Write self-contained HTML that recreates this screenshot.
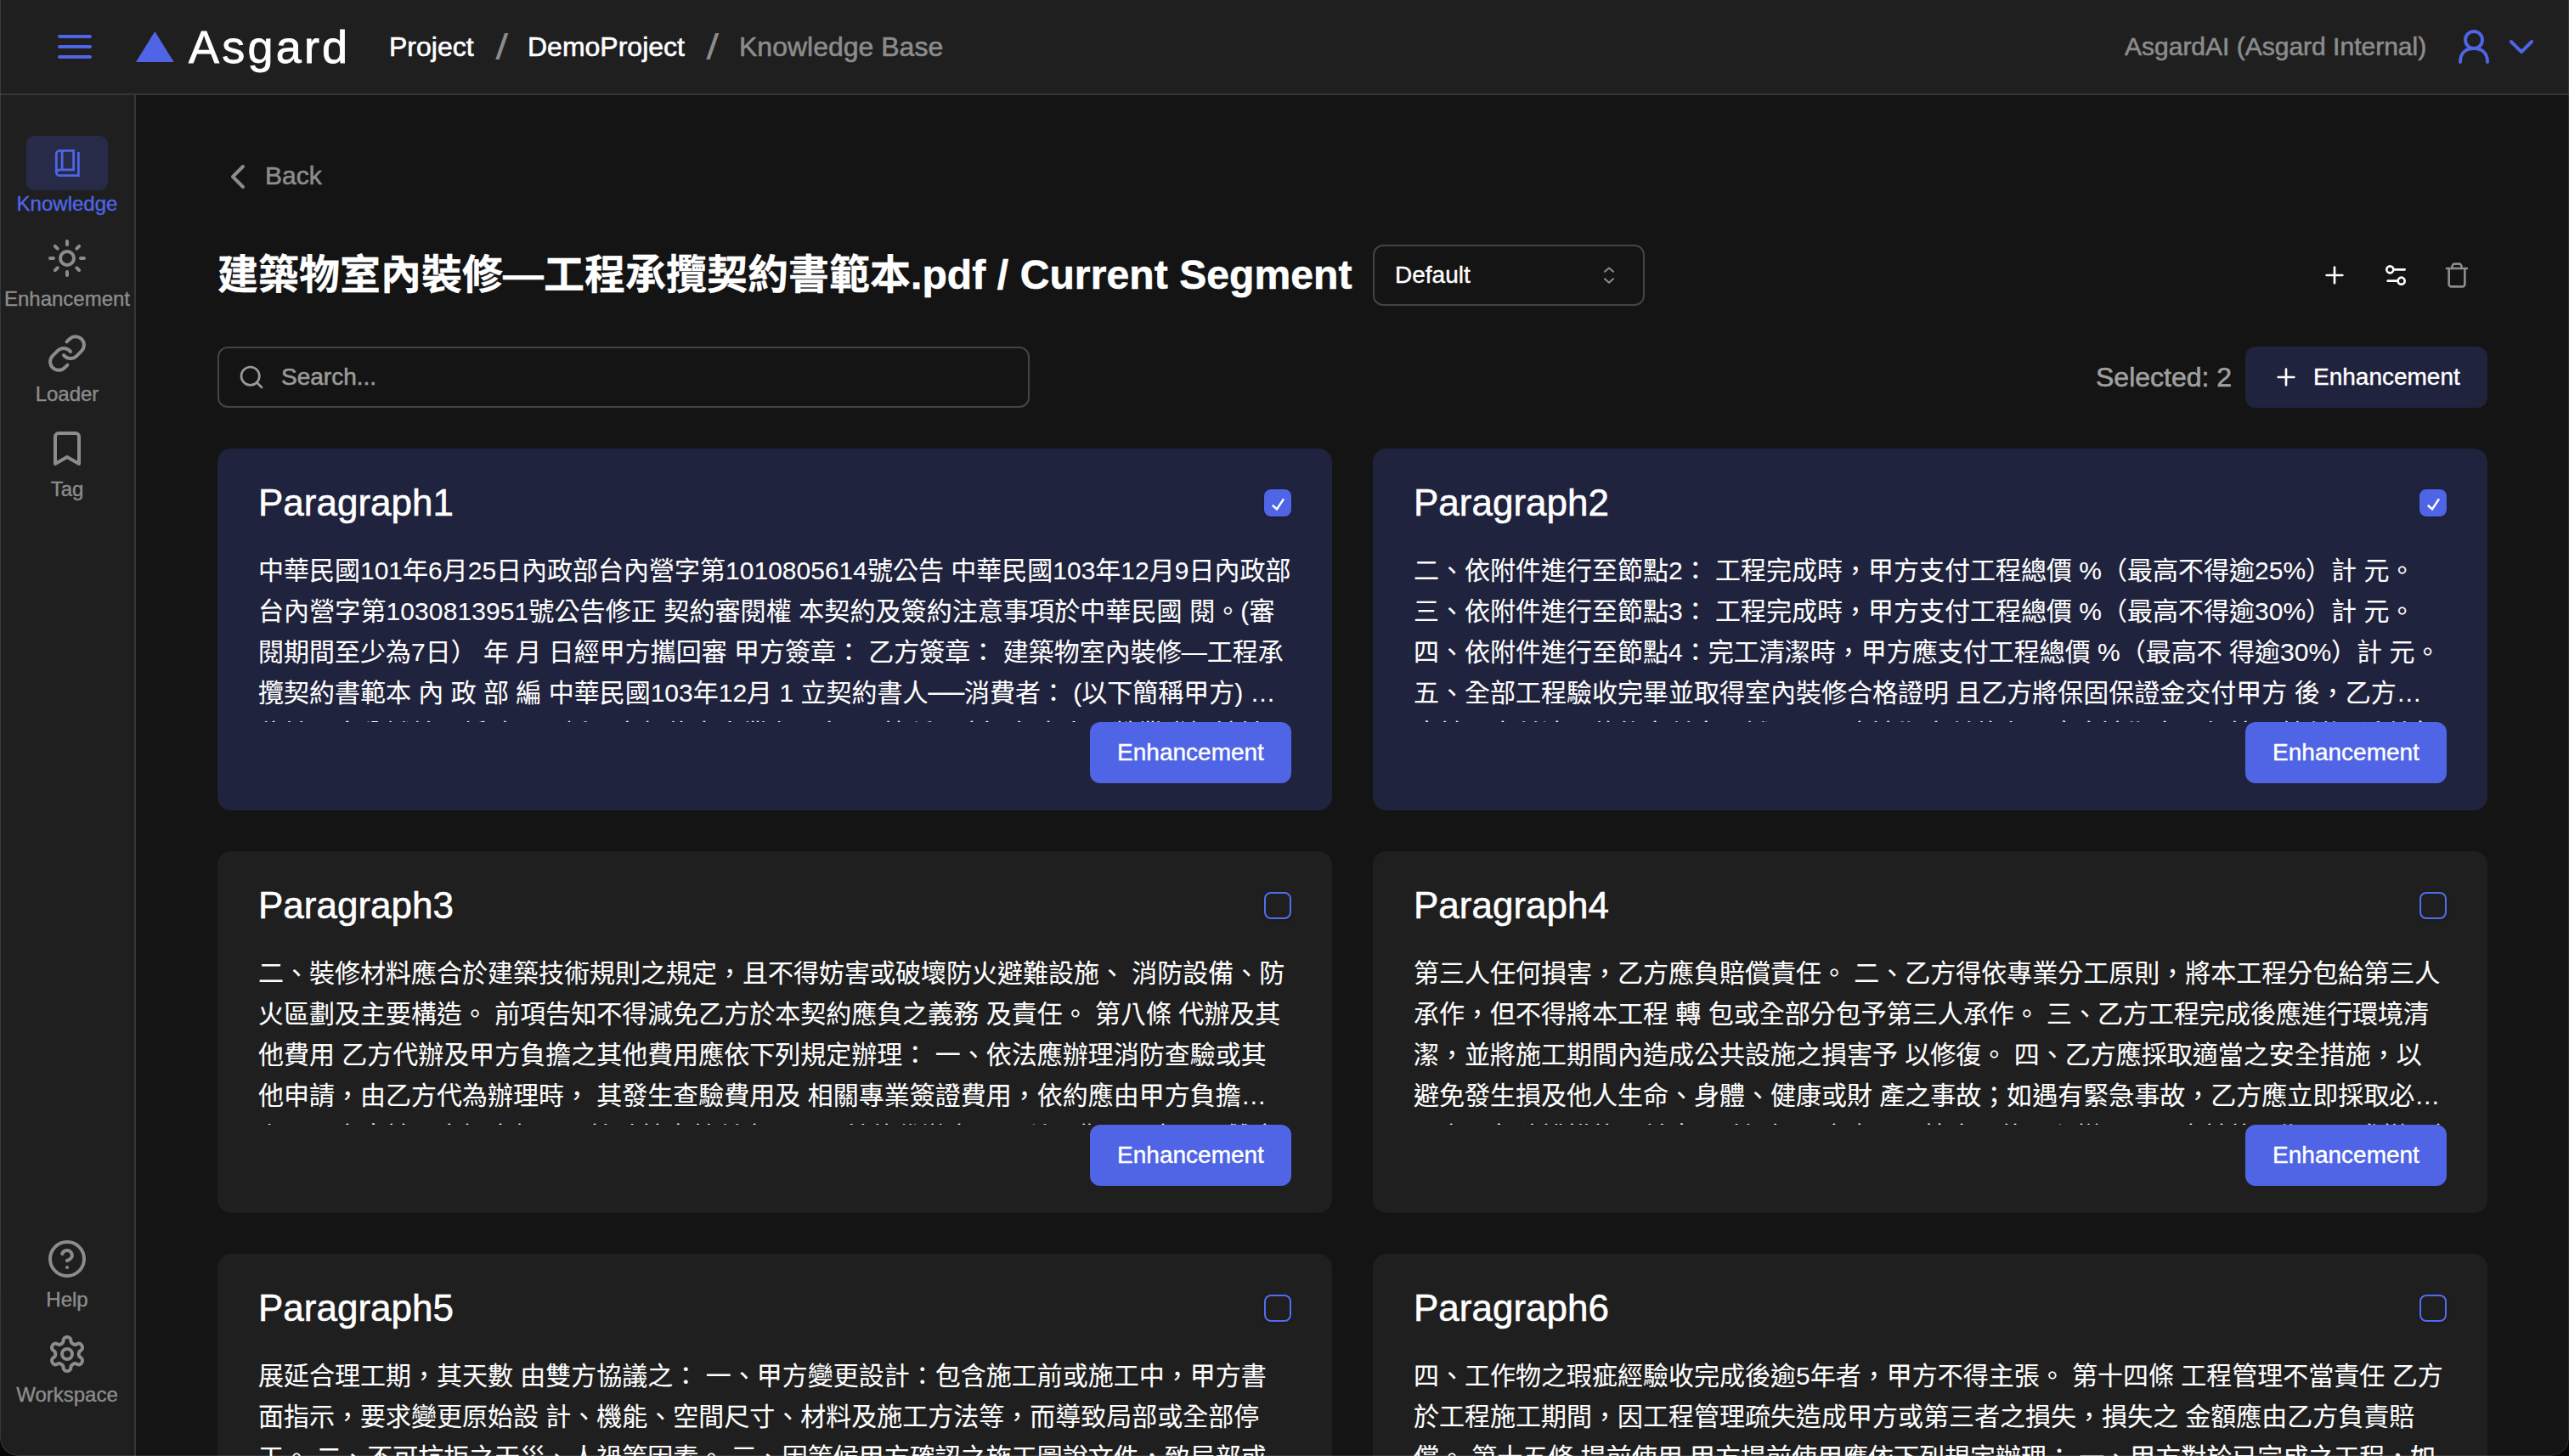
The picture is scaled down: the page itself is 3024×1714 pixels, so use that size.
<!DOCTYPE html>
<html lang="zh-Hant">
<head>
<meta charset="utf-8">
<title>Asgard - Knowledge Base</title>
<style>
*{box-sizing:border-box;margin:0;padding:0}
html,body{width:3024px;height:1714px;overflow:hidden;background:#141414}
body{position:relative;font-family:"Liberation Sans","Noto Sans CJK TC",sans-serif;color:#fff;-webkit-font-smoothing:antialiased;-webkit-text-stroke:0.6px}
.abs{position:absolute}
svg{display:block;overflow:visible}
/* header */
#hdr{position:absolute;left:0;top:0;width:3024px;height:112px;background:#1f1f1f;border-bottom:2px solid #363636}
#hdr .t{position:absolute;top:35px;height:40px;line-height:40px;font-size:32px;white-space:nowrap}
.gray{color:#8c8c8c}
#hdr .sl{font-size:42px;top:36px;transform:scaleX(1.28);-webkit-text-stroke:0}
/* sidebar */
#side{position:absolute;left:0;top:112px;width:160px;height:1602px;background:#1f1f1f;border-right:2px solid #363636}
.nav{position:absolute;left:0;width:158px;text-align:center;font-size:24px;line-height:28px;color:#8c8c8c;white-space:nowrap;-webkit-text-stroke:0.4px}
.nav.on{color:#4f65e6}
.ico{position:absolute}
/* main */
.btn{position:absolute;background:#4f65e6;border-radius:12px;color:#fff;font-size:28px;text-align:center;white-space:nowrap;-webkit-text-stroke:0.4px}
.card{position:absolute;width:1312px;height:426px;border-radius:16px;background:#1f1f1f;overflow:hidden}
.card.sel{background:#20233d}
.card h3{position:absolute;left:48px;top:36px;height:56px;line-height:56px;font-size:44px;font-weight:400;white-space:nowrap;-webkit-text-stroke:0.55px}
.card .cb{position:absolute;left:1232px;top:48px;width:32px;height:32px;border-radius:8px;border:2px solid #526cf0;box-shadow:0 1px 3px rgba(0,0,0,.25)}
.card .cb svg{position:absolute;left:-2px;top:-2px}
.card.sel .cb{background:#4f65e6;border-color:#4f65e6}
.card .tx{position:absolute;left:48px;top:120px;width:1216px;height:202px;overflow:hidden;font-size:30px;line-height:48px;-webkit-text-stroke:0.1px}
.card .tx div{white-space:nowrap;height:48px}
.card .btn{left:1027px;top:322px;width:237px;height:72px;line-height:72px}
</style>
</head>
<body>

<!-- HEADER -->
<div id="hdr">
  <svg class="abs" style="left:66px;top:39px" width="44" height="32" viewBox="0 0 44 32"><path d="M4 4H40M4 16H40M4 28H40" stroke="#4f65e6" stroke-width="4" stroke-linecap="round" fill="none"/></svg>
  <svg class="abs" style="left:159.5px;top:37px" width="45" height="36" viewBox="0 0 45 36"><path d="M22.3 0L44.6 36H0Z" fill="#4f65e6"/></svg>
  <div class="abs" id="logo" style="left:222px;top:22px;height:66px;line-height:66px;font-size:54px;letter-spacing:3.2px;-webkit-text-stroke:0.8px #fff;white-space:nowrap">Asgard</div>
  <div class="t" style="left:458px">Project</div>
  <div class="t gray sl" style="left:584.5px">/</div>
  <div class="t" style="left:621px">DemoProject</div>
  <div class="t gray sl" style="left:833.2px">/</div>
  <div class="t gray" style="left:870px">Knowledge Base</div>
  <div class="t gray" id="org" style="left:2501px;font-size:30px">AsgardAI (Asgard Internal)</div>
  <svg class="abs" style="left:2892px;top:33px" width="40" height="44" viewBox="0 0 40 44"><circle cx="20" cy="14" r="10" fill="none" stroke="#4f65e6" stroke-width="4"/><path d="M4 40C4 29 11 24 20 24C29 24 36 29 36 40" fill="none" stroke="#4f65e6" stroke-width="4" stroke-linecap="round"/></svg>
  <svg class="abs" style="left:2952px;top:46px" width="32" height="20" viewBox="0 0 32 20"><path d="M3.9 3L16 15.2L28.1 3" fill="none" stroke="#4f65e6" stroke-width="4" stroke-linecap="round" stroke-linejoin="round"/></svg>
</div>

<!-- SIDEBAR -->
<div id="side">
  <div class="abs" style="left:31px;top:48px;width:96px;height:64px;border-radius:9px;background:#272b47"></div>
  <div class="nav on" style="top:114px">Knowledge</div>
  <div class="nav" style="top:226px">Enhancement</div>
  <div class="nav" style="top:338px">Loader</div>
  <div class="nav" style="top:450px">Tag</div>
  <div class="nav" style="top:1404px">Help</div>
  <div class="nav" style="top:1516px">Workspace</div>
</div>

<!-- SIDEBAR ICONS -->
<svg class="abs" style="left:0;top:0" width="160" height="260" viewBox="0 0 160 260" fill="none" stroke="#4f65e6" stroke-width="2.8" stroke-linejoin="miter"><path d="M66.4 203a3.9 3.2 0 0 1 3.9-3.2H86.6V177.4H70.3a4 4 0 0 0-4 4V202.7a4 4 0 0 0 4 4H92.4V179"/><path d="M73.1 177.4V199.8"/></svg>
<svg class="abs" style="left:55px;top:280px" width="48" height="48" viewBox="0 0 24 24" fill="none" stroke="#8c8c8c" stroke-width="2" stroke-linecap="round" stroke-linejoin="round"><circle cx="12" cy="12" r="4"/><path d="M12 2v2M12 20v2M4.93 4.93l1.41 1.41M17.66 17.66l1.41 1.41M2 12h2M20 12h2M6.34 17.66l-1.41 1.41M19.07 4.93l-1.41 1.41"/></svg>
<svg class="abs" style="left:55px;top:392px" width="48" height="48" viewBox="0 0 24 24" fill="none" stroke="#8c8c8c" stroke-width="2" stroke-linecap="round" stroke-linejoin="round"><path d="M10 13a5 5 0 0 0 7.54.54l3-3a5 5 0 0 0-7.07-7.07l-1.72 1.71"/><path d="M14 11a5 5 0 0 0-7.54-.54l-3 3a5 5 0 0 0 7.07 7.07l1.71-1.71"/></svg>
<svg class="abs" style="left:55px;top:504px" width="48" height="48" viewBox="0 0 24 24" fill="none" stroke="#8c8c8c" stroke-width="2" stroke-linecap="round" stroke-linejoin="round"><path d="M19 21l-7-4-7 4V5a2 2 0 0 1 2-2h10a2 2 0 0 1 2 2v16z"/></svg>
<svg class="abs" style="left:55px;top:1458px" width="48" height="48" viewBox="0 0 24 24" fill="none" stroke="#8c8c8c" stroke-width="2" stroke-linecap="round" stroke-linejoin="round"><circle cx="12" cy="12" r="10"/><path d="M9.09 9a3 3 0 0 1 5.83 1c0 2-3 3-3 3"/><path d="M12 17h.01"/></svg>
<svg class="abs" style="left:55px;top:1570px" width="48" height="48" viewBox="0 0 24 24" fill="none" stroke="#8c8c8c" stroke-width="2" stroke-linecap="round" stroke-linejoin="round"><path d="M12.22 2h-.44a2 2 0 0 0-2 2v.18a2 2 0 0 1-1 1.73l-.43.25a2 2 0 0 1-2 0l-.15-.08a2 2 0 0 0-2.73.73l-.22.38a2 2 0 0 0 .73 2.73l.15.1a2 2 0 0 1 1 1.72v.51a2 2 0 0 1-1 1.74l-.15.09a2 2 0 0 0-.73 2.73l.22.38a2 2 0 0 0 2.73.73l.15-.08a2 2 0 0 1 2 0l.43.25a2 2 0 0 1 1 1.73V20a2 2 0 0 0 2 2h.44a2 2 0 0 0 2-2v-.18a2 2 0 0 1 1-1.73l.43-.25a2 2 0 0 1 2 0l.15.08a2 2 0 0 0 2.73-.73l.22-.39a2 2 0 0 0-.73-2.73l-.15-.08a2 2 0 0 1-1-1.74v-.5a2 2 0 0 1 1-1.74l.15-.09a2 2 0 0 0 .73-2.73l-.22-.38a2 2 0 0 0-2.73-.73l-.15.08a2 2 0 0 1-2 0l-.43-.25a2 2 0 0 1-1-1.73V4a2 2 0 0 0-2-2z"/><circle cx="12" cy="12" r="3"/></svg>

<!-- MAIN -->
<div id="main">
  <div class="abs gray" id="back" style="left:312px;top:187px;height:40px;line-height:40px;font-size:30px">Back</div>
  <div class="abs" id="title" style="left:256px;top:288px;height:72px;line-height:72px;font-size:48px;font-weight:700;white-space:nowrap;-webkit-text-stroke:0.3px">建築物室內裝修—工程承攬契約書範本<span style="letter-spacing:0.1px;-webkit-text-stroke:0.6px">.pdf / Current Segment</span></div>
  <div class="abs" id="select" style="left:1616px;top:288px;width:320px;height:72px;border:2px solid #444;border-radius:12px;line-height:68px;font-size:28px;padding-left:24px;-webkit-text-stroke:0.4px">Default</div>
  <div class="abs" id="search" style="left:256px;top:408px;width:956px;height:72px;border:2px solid #444;border-radius:12px;line-height:68px;font-size:28px;padding-left:73px;color:#9a9a9a">Search...</div>
  <div class="abs" id="selcount" style="left:2467px;top:424px;height:40px;line-height:40px;font-size:32px;color:#a0a0a0;white-space:nowrap">Selected: 2</div>
  <div class="btn" id="enh" style="left:2643px;top:408px;width:285px;height:72px;line-height:72px;background:#20233d;text-align:left;padding-left:80px">Enhancement</div>

  <svg class="abs" style="left:256px;top:184px" width="48" height="48" viewBox="0 0 24 24" fill="none" stroke="#8c8c8c" stroke-width="2" stroke-linecap="round" stroke-linejoin="round"><path d="M15 18l-6-6 6-6"/></svg>
  <svg class="abs" style="left:280px;top:428px" width="32" height="32" viewBox="0 0 24 24" fill="none" stroke="#9a9a9a" stroke-width="2" stroke-linecap="round" stroke-linejoin="round"><circle cx="11" cy="11" r="8"/><path d="M21 21l-4.3-4.3"/></svg>
  <svg class="abs" style="left:2732px;top:308px" width="32" height="32" viewBox="0 0 24 24" fill="none" stroke="#fff" stroke-width="2" stroke-linecap="round" stroke-linejoin="round"><path d="M5 12h14M12 5v14"/></svg>
  <svg class="abs" style="left:2804px;top:308px" width="32" height="32" viewBox="0 0 24 24" fill="none" stroke="#fff" stroke-width="2" stroke-linecap="round" stroke-linejoin="round"><path d="M20 7h-9M14 17H5"/><circle cx="17" cy="17" r="3"/><circle cx="7" cy="7" r="3"/></svg>
  <svg class="abs" style="left:2876px;top:308px" width="32" height="32" viewBox="0 0 24 24" fill="none" stroke="#8c8c8c" stroke-width="2" stroke-linecap="round" stroke-linejoin="round"><path d="M3 6h18"/><path d="M19 6v14c0 1-1 2-2 2H7c-1 0-2-1-2-2V6"/><path d="M8 6V4c0-1 1-2 2-2h4c1 0 2 1 2 2v2"/></svg>
  <svg class="abs" style="left:1880px;top:308px" width="28" height="32" viewBox="0 0 28 32" fill="none" stroke="#8c8c8c" stroke-width="2" stroke-linecap="round" stroke-linejoin="round"><path d="M9 11.8L14 7.6L19 11.8M9 20.2L14 24.8L19 20.2"/></svg>
  <svg class="abs" style="left:2675px;top:428px" width="32" height="32" viewBox="0 0 24 24" fill="none" stroke="#fff" stroke-width="2" stroke-linecap="round" stroke-linejoin="round"><path d="M5 12h14M12 5v14"/></svg>

  <!-- CARDS -->
  <div class="card sel" style="left:256px;top:528px">
    <h3>Paragraph1</h3>
    <div class="cb"><svg width="32" height="32" viewBox="0 0 32 32"><path d="M9.8 18.8L15 23.4L23 11.4" fill="none" stroke="#fff" stroke-width="2.5" stroke-linecap="butt" stroke-linejoin="miter"/></svg></div>
    <div class="tx">
      <div class="l1">中華民國101年6月25日內政部台內營字第1010805614號公告 中華民國103年12月9日內政部</div>
      <div class="l2" style="letter-spacing:0.1px">台內營字第1030813951號公告修正 契約審閱權 本契約及簽約注意事項於中華民國 閱。(審</div>
      <div class="l3">閱期間至少為7日） 年 月 日經甲方攜回審 甲方簽章： 乙方簽章： 建築物室內裝修—工程承</div>
      <div class="l4">攬契約書範本 內 政 部 編 中華民國103年12月 1 立契約書人──消費者： (以下簡稱甲方) …</div>
      <div class="l5">住址：身分證統一編號：電話：立契約書人業者：（以下簡稱乙方）負責人：營業登記地址：營利事業統一編號：聯絡電話</div>
    </div>
    <div class="btn">Enhancement</div>
  </div>
  <div class="card sel" style="left:1616px;top:528px">
    <h3>Paragraph2</h3>
    <div class="cb"><svg width="32" height="32" viewBox="0 0 32 32"><path d="M9.8 18.8L15 23.4L23 11.4" fill="none" stroke="#fff" stroke-width="2.5" stroke-linecap="butt" stroke-linejoin="miter"/></svg></div>
    <div class="tx">
      <div class="l1">二、依附件進行至節點2： 工程完成時，甲方支付工程總價 %（最高不得逾25%）計 元。</div>
      <div class="l2">三、依附件進行至節點3： 工程完成時，甲方支付工程總價 %（最高不得逾30%）計 元。</div>
      <div class="l3">四、依附件進行至節點4：完工清潔時，甲方應支付工程總價 %（最高不 得逾30%）計 元。</div>
      <div class="l4">五、全部工程驗收完畢並取得室內裝修合格證明 且乙方將保固保證金交付甲方 後，乙方…</div>
      <div class="l5">應於甲方付清尾款後交付完工證明，甲方逾期未付款者，應自逾期之日起按日給付遲延利息予乙方，並得請求損害賠償</div>
    </div>
    <div class="btn">Enhancement</div>
  </div>
  <div class="card" style="left:256px;top:1002px">
    <h3>Paragraph3</h3>
    <div class="cb"></div>
    <div class="tx">
      <div class="l1">二、裝修材料應合於建築技術規則之規定，且不得妨害或破壞防火避難設施、 消防設備、防</div>
      <div class="l2">火區劃及主要構造。 前項告知不得減免乙方於本契約應負之義務 及責任。 第八條 代辦及其</div>
      <div class="l3">他費用 乙方代辦及甲方負擔之其他費用應依下列規定辦理： 一、依法應辦理消防查驗或其</div>
      <div class="l4">他申請，由乙方代為辦理時， 其發生查驗費用及 相關專業簽證費用，依約應由甲方負擔…</div>
      <div class="l5">者，甲方應於乙方提出相關單據時核實給付之。二、其他代辦事項及所需費用，由甲乙雙方另行以書面議定並附於本契約</div>
    </div>
    <div class="btn">Enhancement</div>
  </div>
  <div class="card" style="left:1616px;top:1002px">
    <h3>Paragraph4</h3>
    <div class="cb"></div>
    <div class="tx">
      <div class="l1">第三人任何損害，乙方應負賠償責任。 二、乙方得依專業分工原則，將本工程分包給第三人</div>
      <div class="l2">承作，但不得將本工程 轉 包或全部分包予第三人承作。 三、乙方工程完成後應進行環境清</div>
      <div class="l3">潔，並將施工期間內造成公共設施之損害予 以修復。 四、乙方應採取適當之安全措施，以</div>
      <div class="l4">避免發生損及他人生命、身體、健康或財 產之事故；如遇有緊急事故，乙方應立即採取必…</div>
      <div class="l5">要之緊急防護措施，並應即時通知甲方處理。第十一條工程變更，甲方於施工期間要求變更設計或增減工程數量時，應以書面</div>
    </div>
    <div class="btn">Enhancement</div>
  </div>
  <div class="card" style="left:256px;top:1476px">
    <h3>Paragraph5</h3>
    <div class="cb"></div>
    <div class="tx">
      <div class="l1">展延合理工期，其天數 由雙方協議之： 一、甲方變更設計：包含施工前或施工中，甲方書</div>
      <div class="l2">面指示，要求變更原始設 計、機能、空間尺寸、材料及施工方法等，而導致局部或全部停</div>
      <div class="l3">工。 二、不可抗拒之天災、人禍等因素。 三、因等候甲方確認之施工圖說文件，致局部或</div>
      <div class="l4">全部停工。 四、其他不可歸責於乙方之事由。 第十條 工程驗收 乙方於工程完工後…</div>
      <div class="l5">應通知甲方進行驗收</div>
    </div>
    <div class="btn">Enhancement</div>
  </div>
  <div class="card" style="left:1616px;top:1476px">
    <h3>Paragraph6</h3>
    <div class="cb"></div>
    <div class="tx">
      <div class="l1">四、工作物之瑕疵經驗收完成後逾5年者，甲方不得主張。 第十四條 工程管理不當責任 乙方</div>
      <div class="l2">於工程施工期間，因工程管理疏失造成甲方或第三者之損失，損失之 金額應由乙方負責賠</div>
      <div class="l3">償。 第十五條 提前使用 甲方提前使用應依下列規定辦理： 一、甲方對於已完成之工程，如</div>
      <div class="l4">有提前使用之必要時，應先經乙方同意，並就該部分辦理驗收後使用之。 二、甲方…</div>
      <div class="l5">未經驗收逕行使用者</div>
    </div>
    <div class="btn">Enhancement</div>
  </div>
</div>

<div class="abs" style="left:0;top:-4px;width:3024px;height:1718px;border:1px solid rgba(255,255,255,0.115);border-top:none;border-radius:0 0 22px 22px;box-shadow:0 0 0 40px #060908;pointer-events:none;z-index:50"></div>
<script>(function(){var w=window.innerWidth||document.documentElement.clientWidth;if(w&&Math.abs(w-3024)>2){document.documentElement.style.zoom=(w/3024);}})();</script>
</body>
</html>
